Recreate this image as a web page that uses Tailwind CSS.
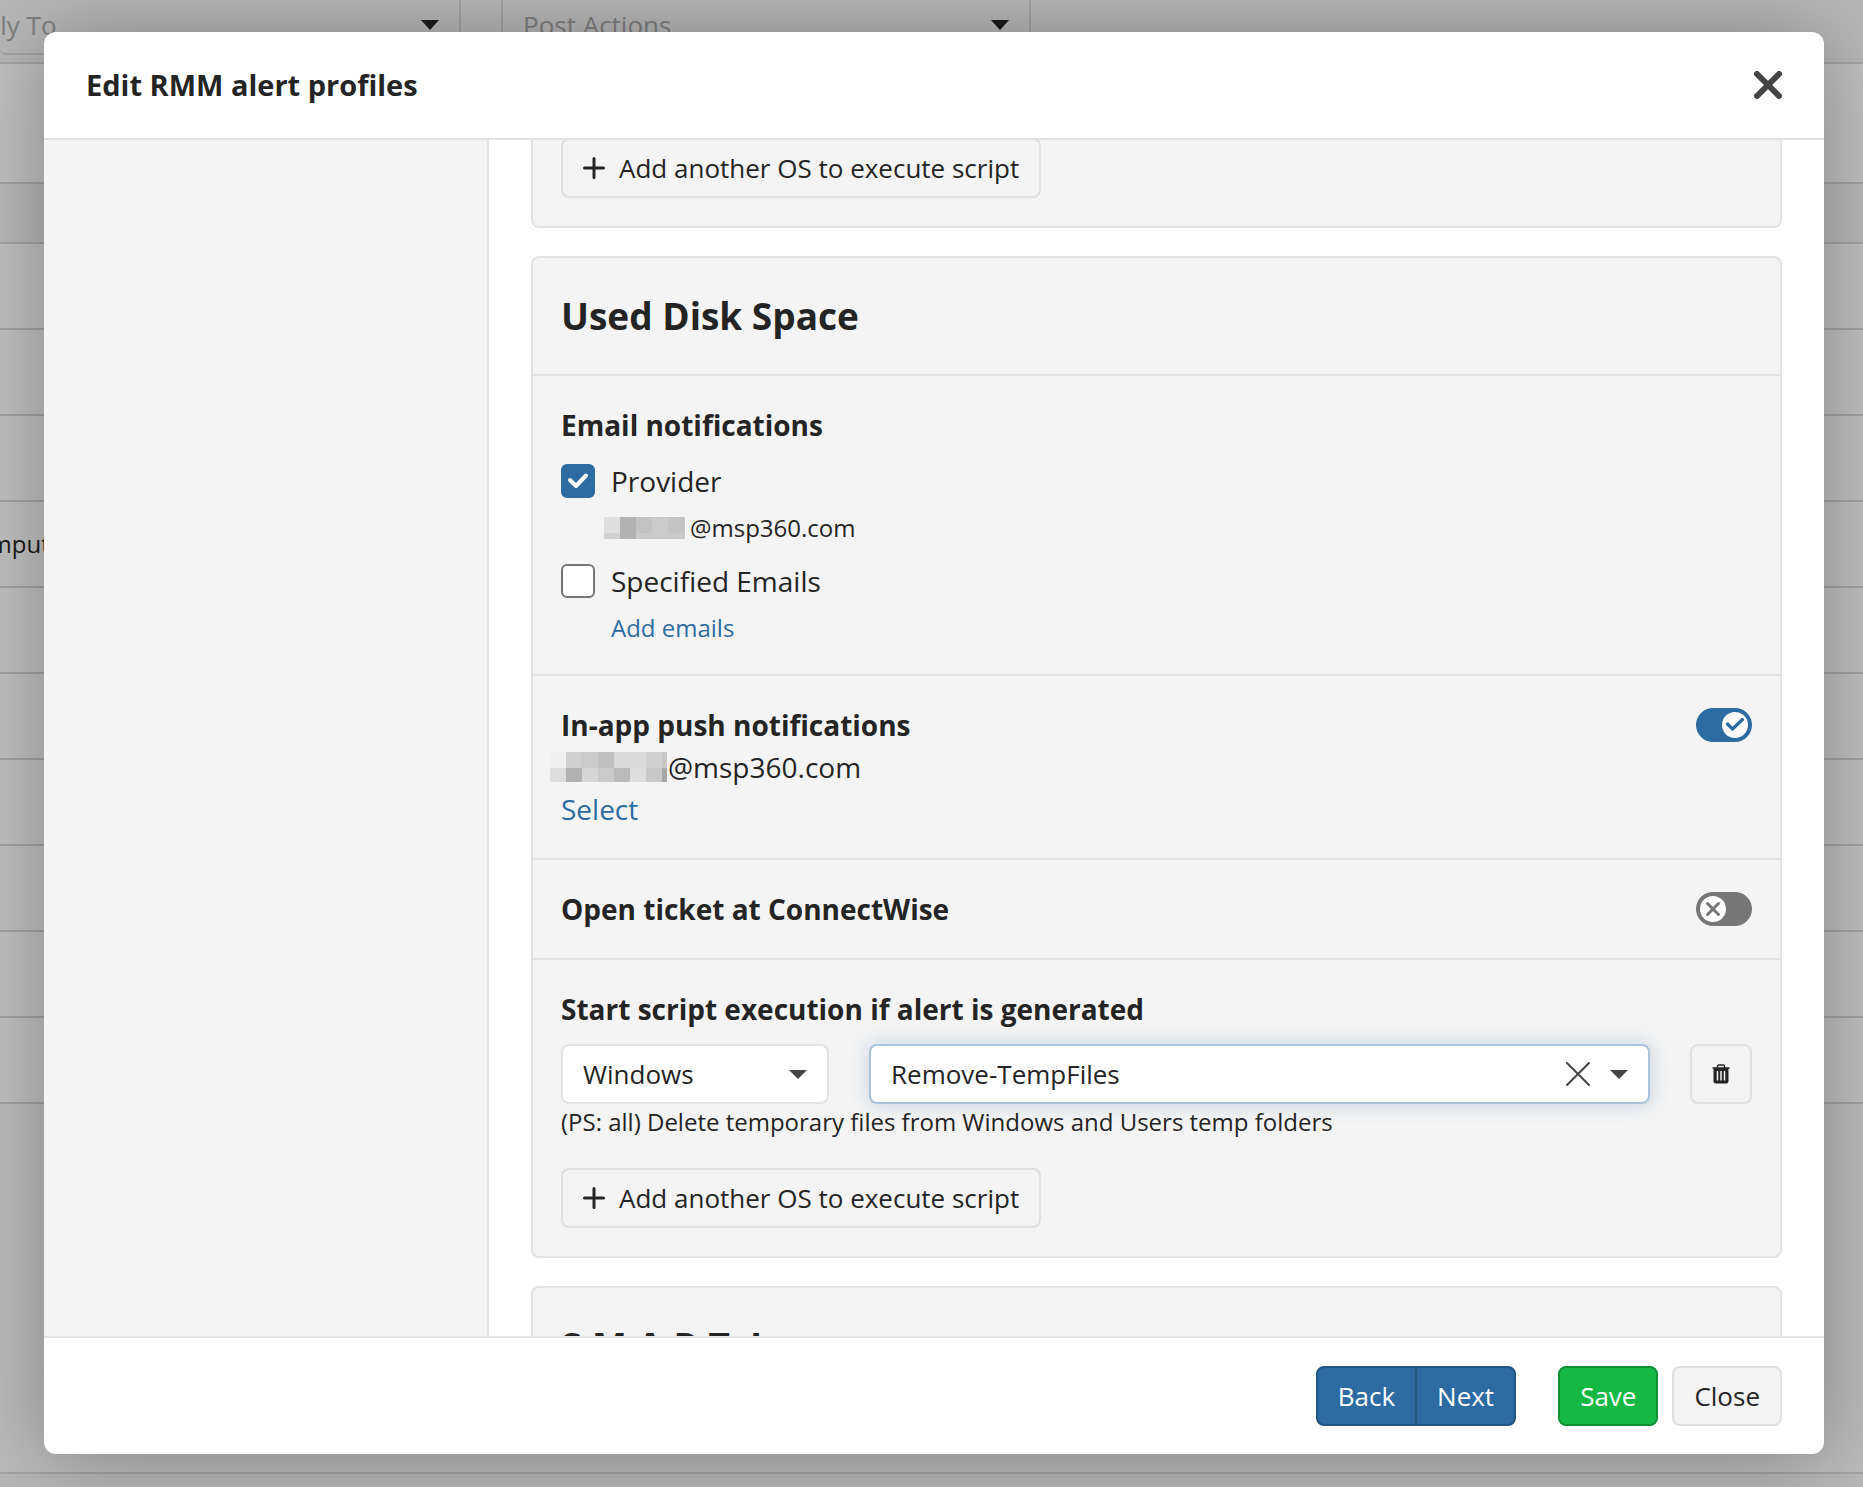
<!DOCTYPE html>
<html lang="en" class="h-full">

<head>
    <meta charset="UTF-8" />
    <meta name="viewport" content="width=device-width, initial-scale=1.0" />
    <title>Edit RMM alert profiles</title>
    <script src="https://cdn.jsdelivr.net/npm/@tailwindcss/browser@4"></script>
</head>

<body class="relative h-full overflow-hidden bg-white font-['Open_Sans',sans-serif] text-[28px] leading-[42px] text-[#242424]">

  <!-- page behind the dialog -->
  <div class="absolute inset-0 overflow-hidden" aria-hidden="true">
    <div class="flex h-16 gap-10 border-b-2 border-[#d8d8d8] bg-[#f4f4f4]">
      <div class="flex h-[55px] w-[461px] items-center justify-between rounded-b-md border-2 border-t-0 border-l-0 border-[#d8d8d8] pr-5 pb-1 text-[26px] text-[#a8a8a8]">
        <span class="-ml-12">Apply To</span>
        <svg class="h-[10px] w-[18px]" viewBox="0 0 18 10" fill="#242424"><path d="M0 0h18l-9 10z" /></svg>
      </div>
      <div class="flex h-[55px] w-[530px] items-center justify-between rounded-b-md border-2 border-t-0 border-[#d8d8d8] px-5 pb-1 text-[26px] text-[#a8a8a8]">
        <span>Post Actions</span>
        <svg class="h-[10px] w-[18px]" viewBox="0 0 18 10" fill="#242424"><path d="M0 0h18l-9 10z" /></svg>
      </div>
    </div>
    <div class="h-[120px] border-b-2 border-[#d8d8d8]"></div>
    <div class="h-[60px] border-b-2 border-[#d8d8d8] bg-[#f4f4f4]"></div>
    <div class="h-[86px] border-b-2 border-[#d8d8d8]"></div>
    <div class="h-[86px] border-b-2 border-[#d8d8d8]"></div>
    <div class="h-[86px] border-b-2 border-[#d8d8d8]"></div>
    <div class="flex h-[86px] items-center border-b-2 border-[#d8d8d8] text-[24px]"><span class="-ml-10">Computers</span></div>
    <div class="h-[86px] border-b-2 border-[#d8d8d8]"></div>
    <div class="h-[86px] border-b-2 border-[#d8d8d8]"></div>
    <div class="h-[86px] border-b-2 border-[#d8d8d8]"></div>
    <div class="h-[86px] border-b-2 border-[#d8d8d8]"></div>
    <div class="h-[86px] border-b-2 border-[#d8d8d8]"></div>
    <div class="h-[86px] border-b-2 border-[#d8d8d8]"></div>
    <div class="h-[370px] border-b-2 border-[#d8d8d8] bg-[#fafafa]"></div>
    <div class="h-4 bg-[#f4f4f4]"></div>
  </div>

  <div class="absolute inset-0 flex bg-black/25 pt-8 pr-[39px] pb-[33px] pl-11">
    <div role="dialog" aria-labelledby="dialog-title" class="flex min-w-0 flex-1 flex-col overflow-hidden rounded-xl bg-white shadow-[0_4px_80px_rgba(0,0,0,0.3)]">

      <header class="flex h-[108px] shrink-0 items-center justify-between border-b-2 border-[#e2e2e2] px-[42px]">
        <h1 id="dialog-title" class="text-[29px] font-bold">Edit RMM alert profiles</h1>
        <button type="button" aria-label="Close dialog">
          <svg class="size-7" viewBox="0 0 28 28" fill="none" stroke="#444" stroke-width="6" stroke-linecap="round"><path d="M3 3l22 22M25 3L3 25" /></svg>
        </button>
      </header>

      <div class="flex min-h-0 flex-1">
        <aside class="w-[445px] shrink-0 border-r-2 border-[#e2e2e2] bg-[#f4f4f4]"></aside>

        <main class="min-w-0 flex-1 overflow-hidden px-[42px]">
          <div class="-mt-0.5 flex flex-col gap-7">

            <section class="rounded-b-lg border-2 border-t-0 border-[#e2e2e2] bg-[#f4f4f4] px-7 pb-7">
              <button type="button" class="flex h-[60px] items-center gap-3.5 rounded-lg border-2 border-[#e0e0e0] px-5 text-[26px]">
                <svg class="size-[22px]" viewBox="0 0 22 22" fill="none" stroke="#242424" stroke-width="3" stroke-linecap="round"><path d="M11 1.500v19M1.500 11h19" /></svg>
                Add another OS to execute script
              </button>
            </section>

            <section class="rounded-lg border-2 border-[#e2e2e2] bg-[#f4f4f4]">
              <h2 class="flex h-[116px] items-center px-7 text-[37px] font-bold">Used Disk Space</h2>

              <div class="border-t-2 border-[#e2e2e2] p-7">
                <h3 class="mb-3.5 font-bold">Email notifications</h3>
                <label class="flex items-center gap-4">
                  <span class="relative flex">
                    <input type="checkbox" checked class="peer size-[34px] appearance-none rounded-md border-2 border-[#767676] bg-white checked:border-[#2d6ca2] checked:bg-[#2d6ca2]" />
                    <svg class="pointer-events-none absolute inset-0 hidden size-[34px] peer-checked:block" viewBox="0 0 34 34" fill="none" stroke="#fff" stroke-width="4" stroke-linecap="round" stroke-linejoin="round"><path d="M9 16l6 6L25 11.500" /></svg>
                  </span>
                  Provider
                </label>
                <div class="mt-2 mb-3.5 flex items-center gap-[5px] pl-[43px] text-[24px] leading-9">
                  <svg class="h-[22px] w-[81px]" viewBox="0 0 81 22" shape-rendering="crispEdges" aria-hidden="true">
                    <path fill="#dedede" d="M0 0h16v16H0z" /><path fill="#b2b2b2" d="M16 0h16v22H16z" /><path fill="#c2c2c2" d="M32 0h16v16H32z" /><path fill="#cacaca" d="M48 0h16v22H48z" /><path fill="#c4c4c4" d="M64 0h17v16H64z" />
                    <path fill="#d0d0d0" d="M0 16h16v6H0z" /><path fill="#cacaca" d="M32 16h16v6H32zM64 16h17v6H64z" />
                  </svg>
                  @msp360.com
                </div>
                <label class="flex items-center gap-4">
                  <span class="relative flex">
                    <input type="checkbox" class="peer size-[34px] appearance-none rounded-md border-2 border-[#767676] bg-white checked:border-[#2d6ca2] checked:bg-[#2d6ca2]" />
                    <svg class="pointer-events-none absolute inset-0 hidden size-[34px] peer-checked:block" viewBox="0 0 34 34" fill="none" stroke="#fff" stroke-width="4" stroke-linecap="round" stroke-linejoin="round"><path d="M9 16l6 6L25 11.500" /></svg>
                  </span>
                  Specified Emails
                </label>
                <a href="#" class="mt-2 ml-[50px] block w-fit text-[24px] leading-9 text-[#2d6ca2]">Add emails</a>
              </div>

              <div class="flex items-start justify-between border-t-2 border-[#e2e2e2] p-7">
                <div>
                  <h3 id="push-label" class="font-bold">In-app push notifications</h3>
                  <div class="-ml-[11px] flex items-center">
                    <svg class="mr-px h-[30px] w-[117px]" viewBox="0 0 117 30" shape-rendering="crispEdges" aria-hidden="true">
                      <path fill="#f0f0f0" d="M0 0h16v16H0z" /><path fill="#d0d0d0" d="M16 0h16v16H16z" /><path fill="#cacaca" d="M32 0h16v16H32z" /><path fill="#c0c0c0" d="M48 0h16v16H48z" /><path fill="#dadada" d="M64 0h32v16H64z" /><path fill="#d0d0d0" d="M96 0h16v16H96z" /><path fill="#c8c8c8" d="M112 0h5v16h-5z" />
                      <path fill="#dedede" d="M0 16h16v14H0z" /><path fill="#b2b2b2" d="M16 16h16v14H16z" /><path fill="#d6d6d6" d="M32 16h16v14H32z" /><path fill="#cacaca" d="M48 16h16v14H48z" /><path fill="#bababa" d="M64 16h16v14H64z" /><path fill="#dedede" d="M80 16h16v14H80z" /><path fill="#c8c8c8" d="M96 16h16v14H96z" /><path fill="#a8a8a8" d="M112 16h5v14h-5z" />
                    </svg>
                    @msp360.com
                  </div>
                  <a href="#" class="block w-fit text-[#2d6ca2]">Select</a>
                </div>
                <span class="relative mt-1 flex">
                  <input type="checkbox" role="switch" checked aria-labelledby="push-label" class="h-[34px] w-14 appearance-none rounded-full bg-[#2d6ca2]" />
                  <svg class="pointer-events-none absolute inset-0 h-[34px] w-14" viewBox="0 0 56 34" fill="none"><circle cx="39" cy="17" r="13" fill="#fff" /><path d="M31.500 16l5 5L46.500 11.500" stroke="#2d6ca2" stroke-width="3.200" stroke-linecap="round" stroke-linejoin="round" /></svg>
                </span>
              </div>

              <div class="flex items-start justify-between border-t-2 border-[#e2e2e2] p-7">
                <h3 id="ticket-label" class="font-bold">Open ticket at ConnectWise</h3>
                <span class="relative mt-1 flex">
                  <input type="checkbox" role="switch" aria-labelledby="ticket-label" class="h-[34px] w-14 appearance-none rounded-full bg-[#767676]" />
                  <svg class="pointer-events-none absolute inset-0 h-[34px] w-14" viewBox="0 0 56 34" fill="none"><circle cx="17" cy="17" r="13" fill="#fff" /><path d="M11.500 11.500l11 11M22.500 11.500l-11 11" stroke="#767676" stroke-width="3" stroke-linecap="round" /></svg>
                </span>
              </div>

              <div class="border-t-2 border-[#e2e2e2] p-7">
                <h3 class="mb-3.5 font-bold">Start script execution if alert is generated</h3>
                <div class="flex gap-10 text-[26px]">
                  <div class="relative w-[268px]">
                    <select aria-label="Operating system" class="h-[60px] w-full appearance-none rounded-lg border-2 border-[#e2e2e2] bg-white px-5">
                      <option>Windows</option>
                      <option>macOS</option>
                      <option>Linux</option>
                    </select>
                    <svg class="pointer-events-none absolute top-[26px] right-[22px] h-[9px] w-[18px]" viewBox="0 0 18 9" fill="#444"><path d="M0 0h18l-9 9z" /></svg>
                  </div>
                  <div class="flex h-[60px] min-w-0 flex-1 items-center gap-5 rounded-lg border-2 border-[#a9c3dc] bg-white px-5 shadow-[0_0_20px_rgba(45,108,162,0.25)]">
                    <input type="text" aria-label="Script" value="Remove-TempFiles" class="min-w-0 flex-1 outline-none" />
                    <button type="button" aria-label="Clear script">
                      <svg class="size-6" viewBox="0 0 24 24" fill="none" stroke="#444" stroke-width="2" stroke-linecap="round"><path d="M1 1l22 22M23 1L1 23" /></svg>
                    </button>
                    <svg class="h-[9px] w-[18px]" viewBox="0 0 18 9" fill="#444"><path d="M0 0h18l-9 9z" /></svg>
                  </div>
                  <button type="button" aria-label="Delete script" class="flex h-[60px] w-[62px] items-center justify-center rounded-lg border-2 border-[#e0e0e0]">
                    <svg class="h-5 w-[18px]" viewBox="0 0 18 20" fill="none">
                      <path d="M5.500 4V2.300Q5.500 1 6.800 1h4.400q1.300 0 1.300 1.300V4" stroke="#242424" stroke-width="1.400" />
                      <path d="M.5 3.200h17v1.600h-1V17q0 2.500-2.500 2.500H4Q1.500 19.500 1.500 17V4.800h-1z" fill="#242424" />
                      <path d="M5.500 7v9.500M9 7v9.500M12.500 7v9.500" stroke="#f4f4f4" stroke-width="1.500" />
                    </svg>
                  </button>
                </div>
                <p class="mb-7 text-[24px] leading-9">(PS: all) Delete temporary files from Windows and Users temp folders</p>
                <button type="button" class="flex h-[60px] items-center gap-3.5 rounded-lg border-2 border-[#e0e0e0] px-5 text-[26px]">
                  <svg class="size-[22px]" viewBox="0 0 22 22" fill="none" stroke="#242424" stroke-width="3" stroke-linecap="round"><path d="M11 1.500v19M1.500 11h19" /></svg>
                  Add another OS to execute script
                </button>
              </div>
            </section>

            <section class="rounded-lg border-2 border-[#e2e2e2] bg-[#f4f4f4]">
              <h2 class="flex h-[116px] items-center px-7 text-[37px] font-bold">S.M.A.R.T. I</h2>
            </section>

          </div>
        </main>
      </div>

      <footer class="flex shrink-0 items-center justify-end border-t-2 border-[#e2e2e2] px-[42px] py-7 text-[26px]">
        <div class="mr-[42px] flex text-white">
          <button type="button" class="h-[60px] rounded-l-lg border-2 border-[#245682] bg-[#2d6ca2] px-5">Back</button>
          <button type="button" class="-ml-0.5 h-[60px] rounded-r-lg border-2 border-[#245682] bg-[#2d6ca2] px-5">Next</button>
        </div>
        <button type="button" class="mr-3.5 h-[60px] rounded-lg border-2 border-[#129237] bg-[#16b845] px-5 text-white">Save</button>
        <button type="button" class="h-[60px] rounded-lg border-2 border-[#e0e0e0] bg-[#f4f4f4] px-5">Close</button>
      </footer>
    </div>
  </div>
</body>

</html>
